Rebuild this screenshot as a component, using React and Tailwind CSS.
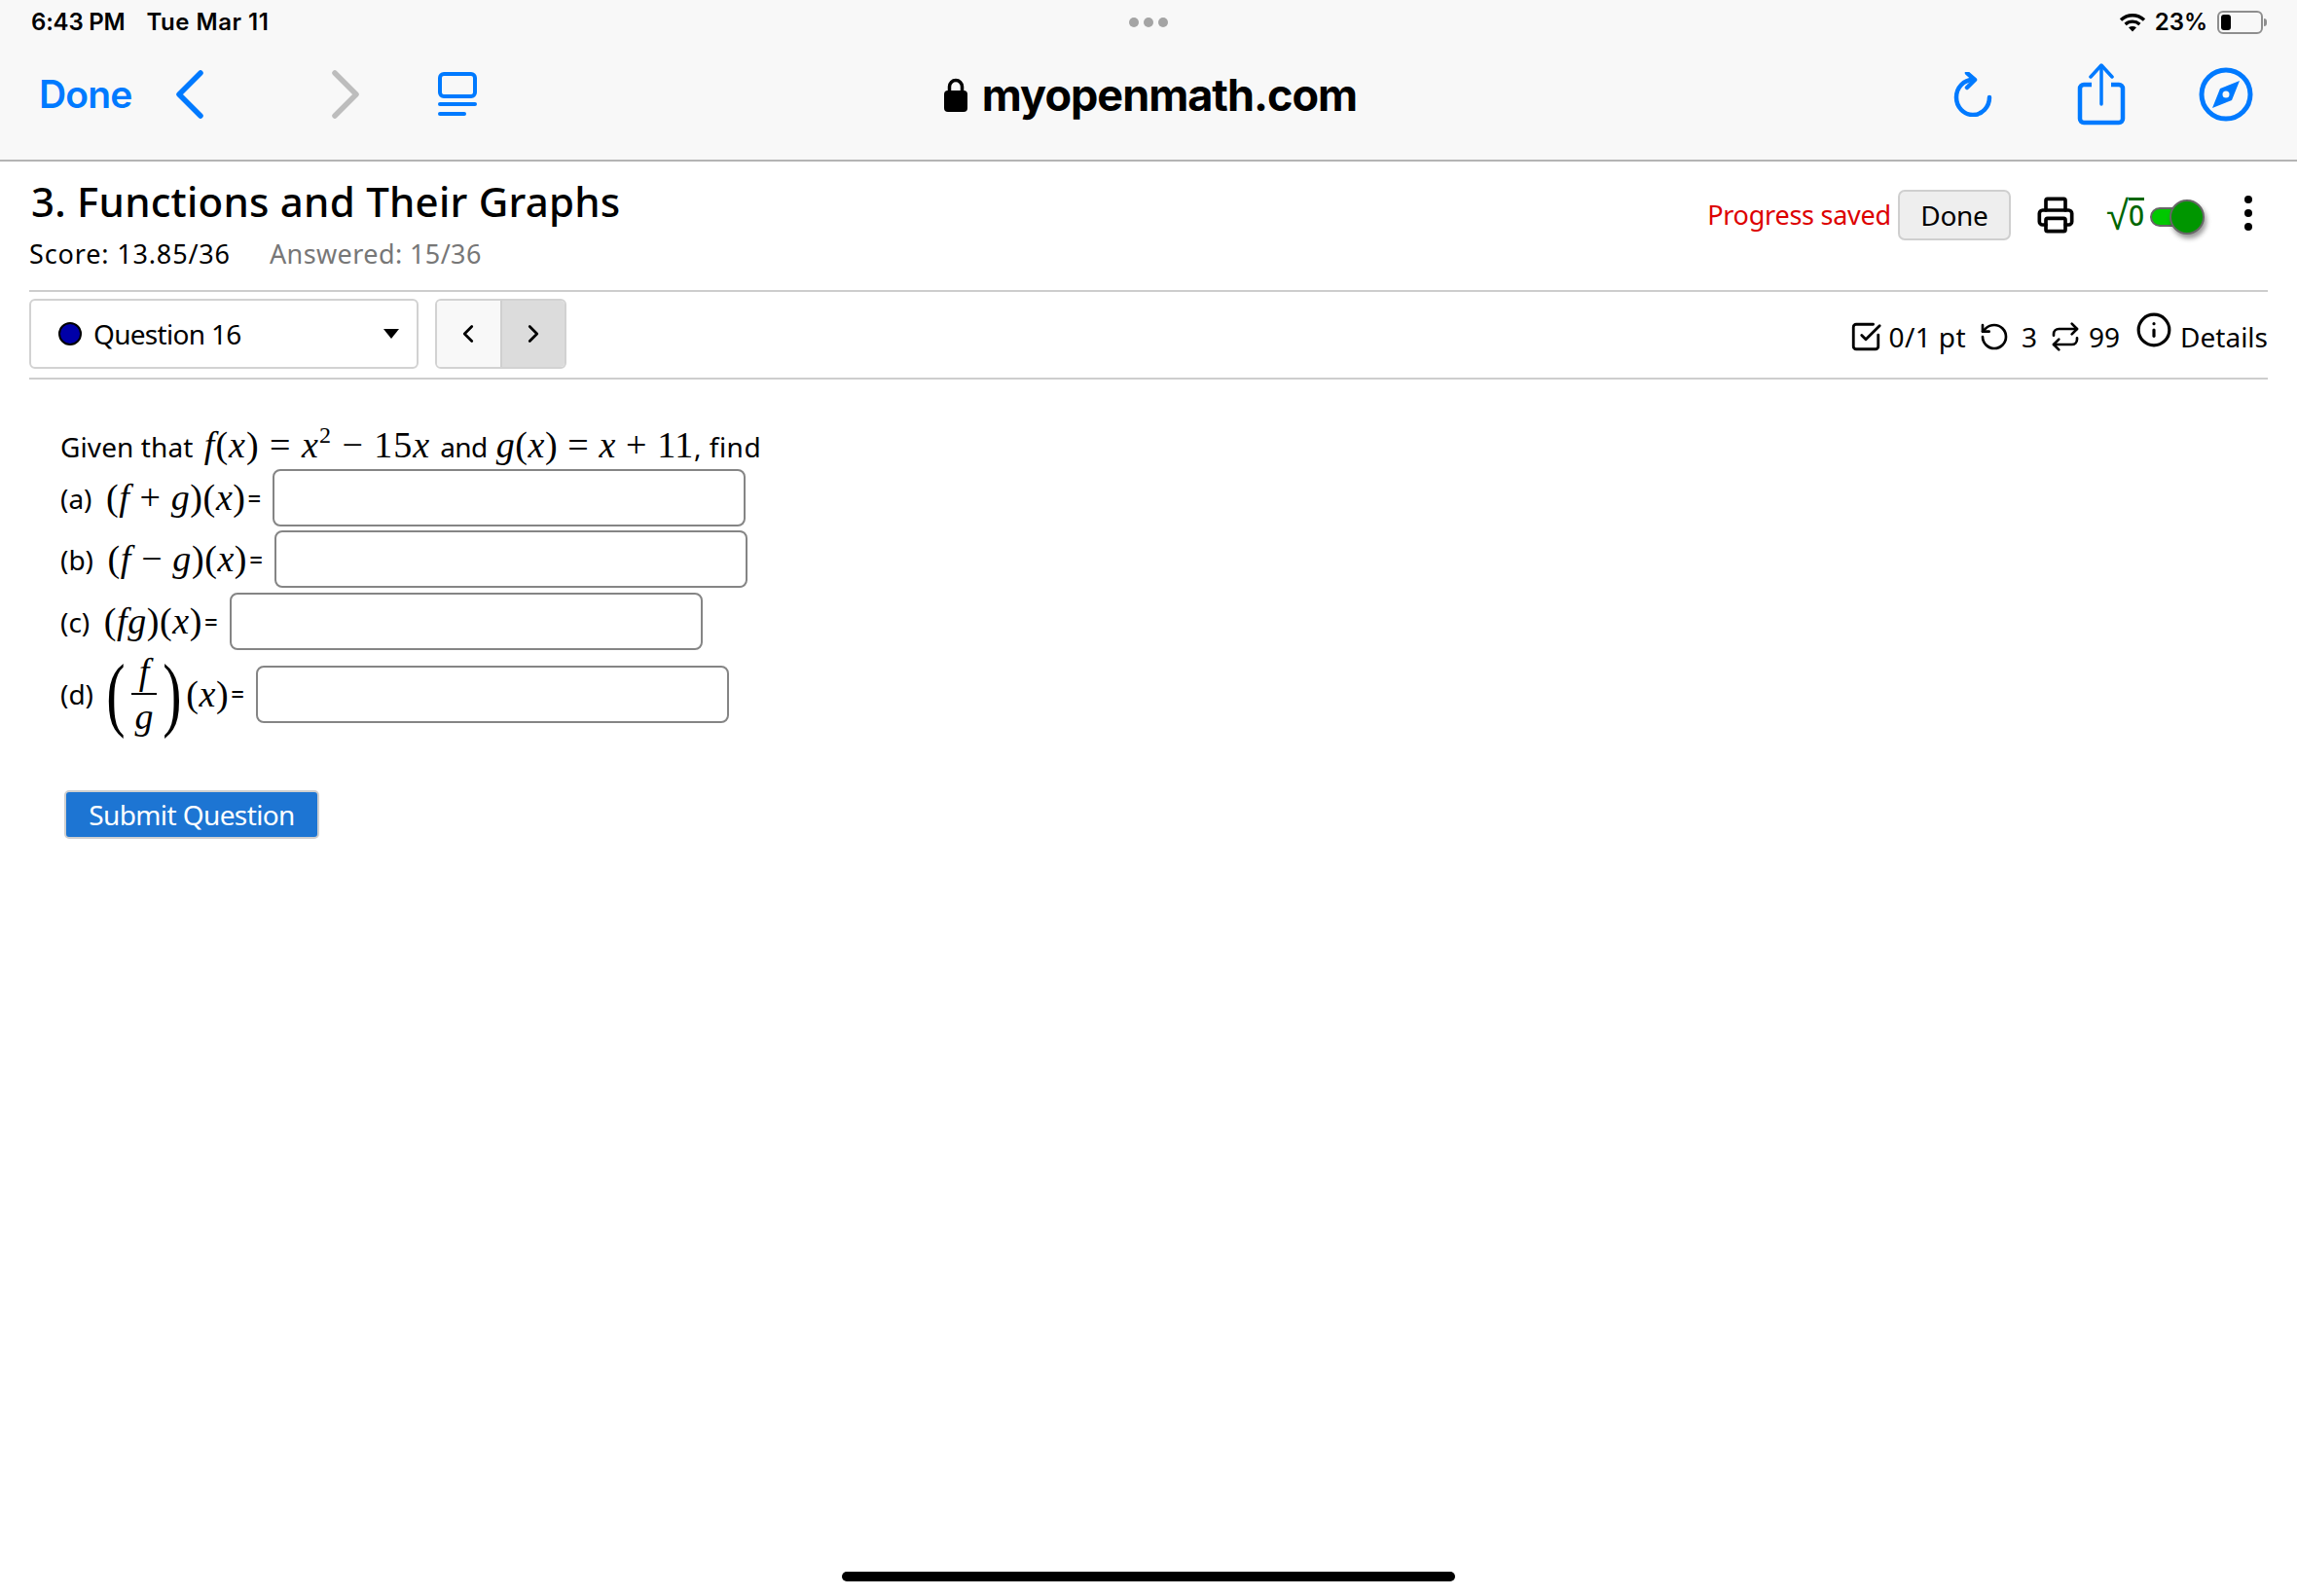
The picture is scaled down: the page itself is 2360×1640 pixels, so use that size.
import React from "react";
import { ChevronLeft, ChevronRight, Printer, RotateCcw, Repeat, Info, SquareCheckBig } from "lucide-react";

// small helpers for the typeset maths
function M({ children, className = "" }) {
  return <span className={`font-['Liberation_Serif',serif] text-[38px] tracking-[0.6px] ${className}`}>{children}</span>;
}
function I({ children }) {
  return <span className="italic">{children}</span>;
}

function AnswerInput({ className = "" }) {
  return <input className={`w-[486px] h-[59px] rounded-[8px] border-2 border-[#858585] bg-white ${className}`} />;
}

function Eq() {
  return <span className="ml-[2px] text-[24px] font-medium">=</span>;
}

function StatusBar() {
  return (
    <div className="grid grid-cols-3 items-center h-[46px] pl-[32px] pr-[31px] font-['Inter',sans-serif] font-semibold text-[24px] text-black">
      <div className="flex gap-[22px]">
        <span className="tracking-[-0.2px]">6:43 PM</span>
        <span className="tracking-[0.5px]">Tue Mar 11</span>
      </div>
      <div className="flex justify-center gap-[5px]">
        <span className="w-[10px] h-[10px] rounded-full bg-[#a4a4a4]" />
        <span className="w-[10px] h-[10px] rounded-full bg-[#a4a4a4]" />
        <span className="w-[10px] h-[10px] rounded-full bg-[#a4a4a4]" />
      </div>
      <div className="flex items-center justify-end gap-[9px]">
        <svg width="28" height="20" viewBox="0 0 28 20" fill="none" stroke="#000" strokeWidth="3.4">
          <path d="M2 7.5C9 1.2 19 1.2 26 7.5" />
          <path d="M6.6 12C11 8.2 17 8.2 21.4 12" />
          <path d="M14 19.5l-4-4.2c2.4-1.8 5.6-1.8 8 0z" fill="#000" stroke="none" />
        </svg>
        <span>23%</span>
        <div className="flex items-center ml-[1px]">
          <div className="w-[47px] h-[24px] rounded-[6px] border-2 border-[#8e8e8e] p-[2px]">
            <div className="w-[10px] h-full rounded-[3px] bg-black" />
          </div>
          <div className="w-[3px] h-[8px] rounded-r-full bg-[#8e8e8e] ml-[1px]" />
        </div>
      </div>
    </div>
  );
}

function SafariBar() {
  return (
    <div className="grid grid-cols-3 items-center h-[120px] pb-[16px] border-b-2 border-[#b4b4b4] pl-[40px] pr-[45px]">
      <div className="flex items-center">
        <span className="font-['Inter',sans-serif] font-semibold text-[39px] text-[#007aff] tracking-[-0.8px]">Done</span>
        <svg className="ml-[44px]" width="30" height="50" viewBox="0 0 30 50" fill="none" stroke="#007aff" strokeWidth="5.500" strokeLinecap="round" strokeLinejoin="round">
          <path d="M26 3L4 25l22 22" />
        </svg>
        <svg className="ml-[130px]" width="30" height="50" viewBox="0 0 30 50" fill="none" stroke="#bdbdbd" strokeWidth="5.500" strokeLinecap="round" strokeLinejoin="round">
          <path d="M4 3l22 22L4 47" />
        </svg>
        <svg className="ml-[80px]" width="40" height="46" viewBox="0 0 40 46" fill="none" stroke="#007aff" strokeWidth="4" strokeLinecap="round">
          <rect x="2" y="2" width="36" height="23" rx="4" />
          <path d="M2 33h36" />
          <path d="M2 43h25" />
        </svg>
      </div>
      <div className="flex items-center justify-center gap-[14px] pl-[8px]">
        <svg width="26" height="36" viewBox="0 0 26 36">
          <path d="M6.500 15V10a6.500 6.500 0 0 1 13 0v5" fill="none" stroke="#000" strokeWidth="3.500" />
          <rect x="1" y="14" width="24" height="22" rx="4" fill="#000" />
        </svg>
        <span className="font-['Inter',sans-serif] font-bold text-[45px] leading-none text-black tracking-[-1px]">myopenmath.com</span>
      </div>
      <div className="flex items-center justify-end">
        <svg width="40" height="46" viewBox="0 0 40 46" fill="none" stroke="#007aff" strokeWidth="4.500" strokeLinecap="round" strokeLinejoin="round">
          <path d="M37 26a17 18 0 1 1-17-18" />
          <path d="M14 1l8 7-8 8" />
        </svg>
        <svg className="ml-[87px]" width="50" height="64" viewBox="0 0 50 64" fill="none" stroke="#007aff" strokeWidth="4.500" strokeLinecap="round" strokeLinejoin="round">
          <path d="M15 22H7a4 4 0 0 0-4 4v31a4 4 0 0 0 4 4h36a4 4 0 0 0 4-4V26a4 4 0 0 0-4-4h-8" strokeLinecap="butt" />
          <path d="M25 42V3" strokeWidth="3.500" />
          <path d="M14 14L25 2l11 12" strokeWidth="3.500" />
        </svg>
        <svg className="ml-[75px]" width="56" height="56" viewBox="0 0 56 56">
          <circle cx="28" cy="28" r="25" fill="none" stroke="#007aff" strokeWidth="5" />
          <path d="M42 14L34 34 22 22z M14 42l8-20 12 12z" fill="#007aff" />
          <circle cx="28" cy="28" r="3.500" fill="#f8f8f8" />
        </svg>
      </div>
    </div>
  );
}

function Toggle() {
  return (
    <div className="flex items-center h-[36px]">
      <div className="w-[36px] h-[20px] rounded-l-full border-2 border-[#666] bg-[#00c800]" />
      <div className="-ml-[16px] w-[36px] h-[36px] rounded-full border-2 border-[#666] bg-[#009600] shadow-[2px_4px_5px_rgba(0,0,0,0.4)]" />
    </div>
  );
}

function CourseHeader() {
  return (
    <div className="flex justify-between mx-[30px] h-[134px] border-b-2 border-[#cdcdcd]">
      <div>
        <h1 className="ml-[2px] mt-[15px] text-[42px] leading-[52px] font-medium tracking-[0.25px] text-black">3. Functions and Their Graphs</h1>
        <div className="mt-[10px] flex text-[27px] leading-[36px] gap-[40px]">
          <span className="text-black tracking-[0.85px]">Score: 13.85/36</span>
          <span className="text-[#777] tracking-[0.4px]">Answered: 15/36</span>
        </div>
      </div>
      <div className="flex items-start pt-[29px] pr-[16px]">
        <span className="mt-[7px] text-[27px] leading-[38px] text-[#dd0000] tracking-[-0.25px]">Progress saved</span>
        <button className="ml-[7px] w-[116px] h-[52px] rounded-[7px] border-2 border-[#cfcfcf] bg-[#eeeeee] text-[28px] tracking-[-0.3px] text-black">Done</button>
        <Printer className="ml-[26px] mt-[6px]" size={40} strokeWidth={2.2} />
        <div className="ml-[32px] mt-[5px] flex items-center text-[#006600]">
          <span className="text-[42px] leading-[40px] font-medium">√</span>
          <span className="border-t-[3px] border-[#006600] text-[28px] font-medium leading-[30px] h-[35px]">0</span>
        </div>
        <div className="ml-[6px] mt-[10px]"><Toggle /></div>
        <div className="ml-[41px] mt-[5px] flex flex-col gap-[6px] pt-[1px]">
          <span className="w-[8px] h-[8px] rounded-full bg-black" />
          <span className="w-[8px] h-[8px] rounded-full bg-black" />
          <span className="w-[8px] h-[8px] rounded-full bg-black" />
        </div>
      </div>
    </div>
  );
}

function QuestionNav() {
  return (
    <div className="flex items-center justify-between mx-[30px] h-[90px] pb-[2px] border-b-2 border-[#cdcdcd]">
      <div className="flex items-center">
        <div className="flex items-center w-[400px] h-[72px] rounded-[6px] border-2 border-[#d2d2d2] pl-[28px] pr-[18px]">
          <span className="w-[24px] h-[24px] rounded-full bg-[#0000a8] border-2 border-black" />
          <span className="ml-[12px] text-[28px] tracking-[-0.7px]">Question 16</span>
          <span className="ml-auto w-0 h-0 border-x-[8px] border-x-transparent border-t-[10px] border-t-black" />
        </div>
        <div className="ml-[17px] flex h-[72px] w-[135px] rounded-[6px] border-2 border-[#d2d2d2] overflow-hidden">
          <div className="flex-1 flex items-center justify-center bg-[#f8f8f8] border-r-2 border-[#cfcfcf]"><ChevronLeft size={30} strokeWidth={2.2} /></div>
          <div className="flex-1 flex items-center justify-center bg-[#dcdcdc]"><ChevronRight size={30} strokeWidth={2.2} /></div>
        </div>
      </div>
      <div className="flex items-center mt-[5px] text-[28px] text-black">
        <SquareCheckBig size={34} strokeWidth={2} />
        <span className="ml-[7px] tracking-[0.4px]">0/1 pt</span>
        <RotateCcw className="ml-[13px]" size={32} strokeWidth={2} />
        <span className="ml-[12px]">3</span>
        <Repeat className="ml-[13px]" size={32} strokeWidth={2} />
        <span className="ml-[8px]">99</span>
        <Info className="ml-[16px] -mt-[13px]" size={38} strokeWidth={2} />
        <span className="ml-[8px]">Details</span>
      </div>
    </div>
  );
}

function Question() {
  return (
    <div className="pl-[62px] pt-[47px] text-[28px] text-black">
      <div className="h-[40px] leading-[40px] flex items-baseline whitespace-pre">
        <span className="tracking-[0.1px]">Given that </span>
        <M className="ml-[4px] tracking-[1px]"><I>f</I>(<I>x</I>) = <I>x</I><sup className="text-[24px] -top-[15px]">2</sup> − 15<I>x</I></M>
        <span className="ml-[10px] mr-[9px] tracking-[-0.6px]">and</span>
        <M className="tracking-[0.1px]"><I>g</I>(<I>x</I>) = <I>x</I> + 11</M>
        <span className="tracking-[0.5px]">, find</span>
      </div>
      <div className="mt-[5px] flex items-center whitespace-pre">
        <span>(a)  </span><M>(<I>f</I> + <I>g</I>)(<I>x</I>)</M><Eq />
        <AnswerInput className="ml-[12px]" />
      </div>
      <div className="mt-[4px] flex items-center whitespace-pre">
        <span>(b)  </span><M>(<I>f</I> − <I>g</I>)(<I>x</I>)</M><Eq />
        <AnswerInput className="ml-[12px]" />
      </div>
      <div className="mt-[5px] flex items-center whitespace-pre">
        <span>(c)  </span><M>(<I>fg</I>)(<I>x</I>)</M><Eq />
        <AnswerInput className="ml-[12px]" />
      </div>
      <div className="flex items-center whitespace-pre h-[90px]">
        <span>(d) </span>
        <M className="ml-[6px] text-[58px] leading-[90px] scale-y-[1.45] inline-block">(</M>
        <div className="flex flex-col items-center w-[26px] mx-[6px]">
          <M className="leading-[44px] italic">f</M>
          <div className="w-full h-[2px] bg-black" />
          <M className="leading-[44px] italic">g</M>
        </div>
        <M className="text-[58px] leading-[90px] scale-y-[1.45] inline-block">)</M>
        <M className="ml-[4px]">(<I>x</I>)</M><Eq />
        <AnswerInput className="ml-[12px]" />
      </div>
      <button className="mt-[54px] ml-[4px] w-[262px] h-[50px] rounded-[5px] border-2 border-[#cfcfcf] bg-[#1d75d3] text-white text-[28px] tracking-[-0.6px]">Submit Question</button>
    </div>
  );
}

export default function App() {
  return (
    <div className="flex flex-col h-[1640px] bg-white font-['Noto_Sans',sans-serif]">
      <div className="bg-[#f8f8f8]">
        <StatusBar />
        <SafariBar />
      </div>
      <CourseHeader />
      <QuestionNav />
      <Question />
      <div className="mt-auto mb-[15px] mx-auto w-[630px] h-[10px] rounded-full bg-black" />
    </div>
  );
}
